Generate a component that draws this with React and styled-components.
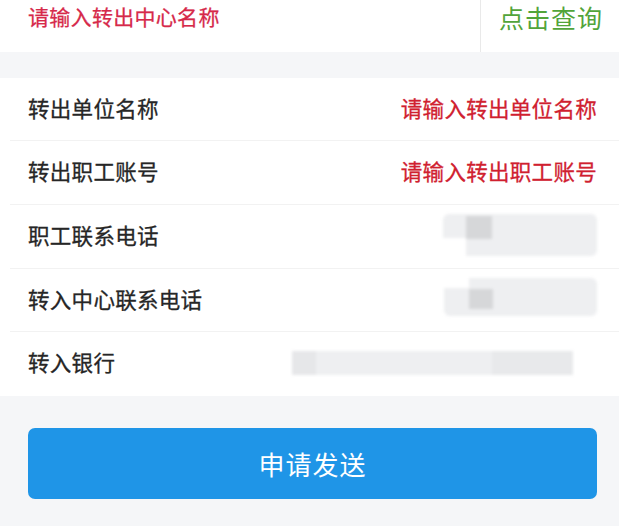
import React from "react";
import styled, { createGlobalStyle } from "styled-components";

const Global = createGlobalStyle`
  html, body { margin: 0; padding: 0; background: #f5f6f8; }
  body { font-family: "Noto Sans CJK SC", "Noto Sans", sans-serif; }
  * { box-sizing: border-box; }
`;

const Page = styled.div`
  width: 619px;
  height: 526px;
  background: #f5f6f8;
  display: flex;
  flex-direction: column;
  overflow: hidden;
`;

const SearchBar = styled.div`
  height: 52px;
  background: #ffffff;
  display: flex;
  align-items: stretch;
`;

const SearchInput = styled.div`
  flex: 1;
  display: flex;
  align-items: flex-start;
  padding: 1px 0 0 28px;
  font-size: 21px;
  line-height: 30px;
  color: #d6294a;
  letter-spacing: 0.3px;
  -webkit-text-stroke: 0.25px #d6294a;
`;

const QueryButton = styled.div`
  width: 139px;
  border-left: 1px solid #e9e9e9;
  display: flex;
  align-items: flex-start;
  padding: 0 0 0 18px;
  font-size: 25px;
  line-height: 34px;
  color: #52a43a;
  letter-spacing: 1px;
`;

const Gap = styled.div`
  height: 26px;
  background: #f5f6f8;
`;

const List = styled.div`
  background: #ffffff;
  display: flex;
  flex-direction: column;
`;

const Row = styled.div`
  position: relative;
  height: ${(p) => p.$h}px;
  display: flex;
  align-items: center;
  justify-content: space-between;
  padding: 0 22px 5px 28px;
  &::after {
    content: "";
    display: ${(p) => (p.$last ? "none" : "block")};
    position: absolute;
    left: 10px;
    right: 0;
    bottom: 0;
    height: 1px;
    background: #f2f2f2;
  }
`;

const Label = styled.span`
  font-size: 21.5px;
  color: #262626;
  letter-spacing: 0.3px;
  -webkit-text-stroke: 0.3px #262626;
`;

const Placeholder = styled.span`
  font-size: 21.5px;
  color: #d0202f;
  letter-spacing: 0.3px;
  -webkit-text-stroke: 0.3px #d0202f;
`;

const Mask = styled.div`
  position: relative;
  width: ${(p) => p.$w}px;
  height: ${(p) => p.$h}px;
  margin-top: ${(p) => p.$mt || 0}px;
  margin-right: ${(p) => p.$mr || 0}px;
  border-radius: 6px;
  background: #eeeff1;
  filter: blur(1.5px);
`;

const MaskDark = styled.div`
  position: absolute;
  left: ${(p) => p.$x}px;
  top: ${(p) => p.$y}px;
  width: ${(p) => p.$w}px;
  height: ${(p) => p.$h}px;
  background: ${(p) => p.$c || "#d6d7d9"};
`;

const Footer = styled.div`
  flex: 1;
  padding: 32px 22px 0 28px;
  background: #f5f6f8;
`;

const SubmitButton = styled.button`
  width: 569px;
  height: 71px;
  border: none;
  border-radius: 7px;
  background: #1f95e7;
  color: #ffffff;
  font-family: "Noto Sans CJK SC", sans-serif;
  font-size: 26px;
  letter-spacing: 1px;
  display: flex;
  align-items: center;
  justify-content: center;
  padding: 0;
`;

export default function App() {
  return (
    <Page>
      <Global />
      <SearchBar>
        <SearchInput>请输入转出中心名称</SearchInput>
        <QueryButton>点击查询</QueryButton>
      </SearchBar>
      <Gap />
      <List>
        <Row $h={63}>
          <Label>转出单位名称</Label>
          <Placeholder>请输入转出单位名称</Placeholder>
        </Row>
        <Row $h={64}>
          <Label>转出职工账号</Label>
          <Placeholder>请输入转出职工账号</Placeholder>
        </Row>
        <Row $h={64}>
          <Label>职工联系电话</Label>
          <Mask $w={154} $h={42} $mt={0}>
            <MaskDark $x={23} $y={2} $w={26} $h={23} />
            <MaskDark $x={0} $y={24} $w={23} $h={18} $c="#ffffff" />
          </Mask>
        </Row>
        <Row $h={63}>
          <Label>转入中心联系电话</Label>
          <Mask $w={153} $h={38} $mt={-2}>
            <MaskDark $x={25} $y={11} $w={24} $h={20} />
            <MaskDark $x={0} $y={0} $w={25} $h={10} $c="#ffffff" />
          </Mask>
        </Row>
        <Row $h={64} $last>
          <Label>转入银行</Label>
          <Mask $w={281} $h={24} $mt={2} $mr={24}>
            <MaskDark $x={0} $y={0} $w={24} $h={24} $c="#e6e7e9" />
            <MaskDark $x={200} $y={0} $w={81} $h={24} $c="#e8e9eb" />
          </Mask>
        </Row>
      </List>
      <Footer>
        <SubmitButton>申请发送</SubmitButton>
      </Footer>
    </Page>
  );
}
